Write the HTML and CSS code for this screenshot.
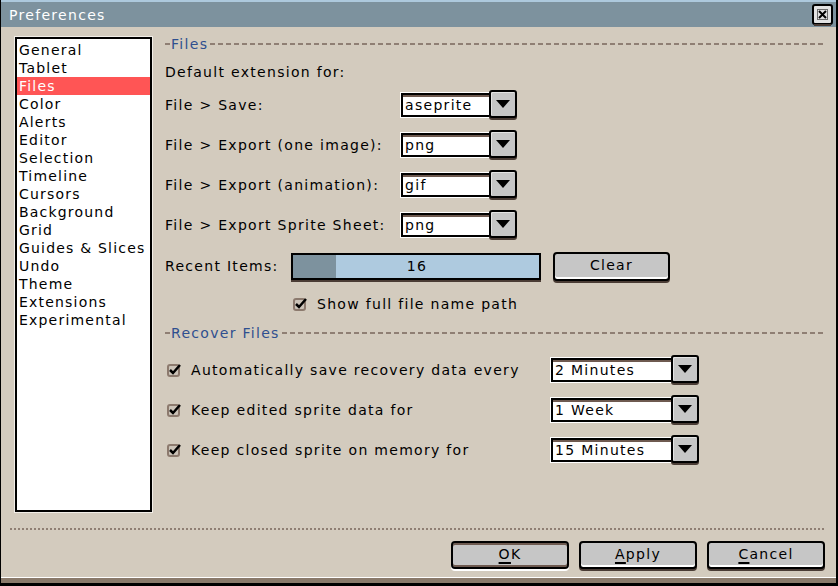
FILE: index.html
```html
<!DOCTYPE html>
<html lang="en">
<head>
    <meta charset="UTF-8">
    <title>Preferences</title>
    <link rel="stylesheet" href="styles.css">
</head>
<body>
<div class="window">
    <div class="titlebar">
        <span>Preferences</span>
        <span class="close">
            <svg width="21" height="23" viewBox="0 0 21 23"><rect x="1" y="1" width="19" height="19" rx="2" fill="#e2e2e2" stroke="#000" stroke-width="2"/><rect x="2" y="20" width="17" height="2" fill="#4a3c35"/><rect x="5.5" y="5.5" width="10" height="10" fill="none" stroke="#6c6c6c"/><path d="M7 7l7 7M14 7l-7 7" stroke="#000" stroke-width="2"/></svg>
        </span>
    </div>

    <div class="main">
        <ul class="sections">
            <li>General</li>
            <li>Tablet</li>
            <li class="active">Files</li>
            <li>Color</li>
            <li>Alerts</li>
            <li>Editor</li>
            <li>Selection</li>
            <li>Timeline</li>
            <li>Cursors</li>
            <li>Background</li>
            <li>Grid</li>
            <li>Guides &amp; Slices</li>
            <li>Undo</li>
            <li>Theme</li>
            <li>Extensions</li>
            <li>Experimental</li>
        </ul>

        <div class="panel">
            <div class="group">Files</div>
            <div class="note">Default extension for:</div>

            <div class="row first">
                <span class="label">File &gt; Save:</span>
                <div class="combo"><span class="entry">aseprite</span><span class="drop"></span></div>
            </div>
            <div class="row">
                <span class="label">File &gt; Export (one image):</span>
                <div class="combo"><span class="entry">png</span><span class="drop"></span></div>
            </div>
            <div class="row">
                <span class="label">File &gt; Export (animation):</span>
                <div class="combo"><span class="entry">gif</span><span class="drop"></span></div>
            </div>
            <div class="row">
                <span class="label">File &gt; Export Sprite Sheet:</span>
                <div class="combo"><span class="entry">png</span><span class="drop"></span></div>
            </div>

            <div class="recent">
                <span class="label">Recent Items:</span>
                <div class="slider"><span class="fill"></span><span class="value">16</span></div>
                <span class="btn clear">Clear</span>
            </div>

            <label class="check path">
                <svg width="16" height="16" viewBox="0 0 16 16"><rect x="1" y="3" width="11" height="11" rx="2" fill="#cbc3b8" stroke="#8c7a6e" stroke-width="2"/><path d="M3 8l3 3 7-8" fill="none" stroke="#000" stroke-width="2.5"/></svg>
                Show full file name path
            </label>

            <div class="group recover">Recover Files</div>

            <div class="row rfirst">
                <label class="check wide">
                    <svg width="16" height="16" viewBox="0 0 16 16"><rect x="1" y="3" width="11" height="11" rx="2" fill="#cbc3b8" stroke="#8c7a6e" stroke-width="2"/><path d="M3 8l3 3 7-8" fill="none" stroke="#000" stroke-width="2.5"/></svg>
                    Automatically save recovery data every
                </label>
                <div class="combo long"><span class="entry">2 Minutes</span><span class="drop"></span></div>
            </div>
            <div class="row">
                <label class="check wide">
                    <svg width="16" height="16" viewBox="0 0 16 16"><rect x="1" y="3" width="11" height="11" rx="2" fill="#cbc3b8" stroke="#8c7a6e" stroke-width="2"/><path d="M3 8l3 3 7-8" fill="none" stroke="#000" stroke-width="2.5"/></svg>
                    Keep edited sprite data for
                </label>
                <div class="combo long"><span class="entry">1 Week</span><span class="drop"></span></div>
            </div>
            <div class="row">
                <label class="check wide">
                    <svg width="16" height="16" viewBox="0 0 16 16"><rect x="1" y="3" width="11" height="11" rx="2" fill="#cbc3b8" stroke="#8c7a6e" stroke-width="2"/><path d="M3 8l3 3 7-8" fill="none" stroke="#000" stroke-width="2.5"/></svg>
                    Keep closed sprite on memory for
                </label>
                <div class="combo long"><span class="entry">15 Minutes</span><span class="drop"></span></div>
            </div>
        </div>
    </div>

    <div class="sep"></div>
    <div class="buttons">
        <span class="btn ok"><u>O</u>K</span>
        <span class="btn"><u>A</u>pply</span>
        <span class="btn"><u>C</u>ancel</span>
    </div>
</div>
</body>
</html>
```

FILE: styles.css
```css
body{
    margin: 0;
    font-family: "DejaVu Sans", sans-serif;
    font-size: 14px;
    letter-spacing: 1.3px;
    color: #000;
}
.window{
    width: 838px;
    height: 586px;
    box-sizing: border-box;
    background: #d3cbbe;
    border-left: 1px solid #000;
    border-right: 2px solid #000;
    border-bottom: 3px solid #000;
    box-shadow: inset 0 -5px 0 #8a7a6b, inset 0 -6px 0 #fff;
    display: flex;
    flex-direction: column;
}
.titlebar{
    height: 25px;
    border-top: 2px solid #adc9dd;
    background: #7d929e;
    color: #fff;
    display: flex;
    align-items: center;
    justify-content: space-between;
    padding: 0 3px 0 8px;
}
.close{
    display: flex;
    margin-top: 2px;
}
.main{
    display: flex;
    align-items: flex-start;
    padding: 10px 10px 0 14px;
}
.sections{
    list-style: none;
    margin: 0;
    padding: 2px 0;
    width: 137px;
    height: 475px;
    box-sizing: border-box;
    border: 2px solid #000;
    background: #fff;
    box-shadow: 0 0 0 1px #f2eee8;
    letter-spacing: 1.2px;
}
.sections li{
    height: 18px;
    line-height: 18px;
    padding-left: 2px;
}
.sections li.active{
    background: #ff5555;
    color: #fff;
}
.panel{
    flex: 1;
    margin-left: 13px;
    margin-top: -1px;
}
.group{
    display: flex;
    align-items: center;
    height: 16px;
    color: #2f4f8f;
}
.group::before{
    content: "";
    width: 5px;
    height: 2px;
    margin-right: 1px;
    background: #8f7f74;
}
.group::after{
    content: "";
    flex: 1;
    height: 2px;
    margin-left: 2px;
    background: repeating-linear-gradient(90deg, #8f7f74 0 5px, transparent 5px 8px);
}
.note{
    height: 18px;
    line-height: 18px;
    margin-top: 11px;
}
.row{
    display: flex;
    align-items: center;
    height: 30px;
    margin-top: 10px;
}
.row.first{
    margin-top: 9px;
}
.row .label{
    width: 236px;
}
.combo{
    display: flex;
    align-items: center;
}
.entry{
    width: 84px;
    height: 20px;
    line-height: 20px;
    padding-left: 2px;
    background: #fff;
    border: 2px solid #000;
    border-right: none;
    box-shadow: inset 0 2px 0 #6e5a50, 0 0 0 1px #fff;
}
.combo.long .entry{
    width: 116px;
}
.drop{
    width: 24px;
    height: 24px;
    background: #c6c6c6;
    border: 2px solid #000;
    border-radius: 3px;
    box-shadow: inset 1px 1px 0 #e4e4e4, 0 2px 0 #4a3c35;
    display: flex;
    align-items: center;
    justify-content: center;
    margin-top: -2px;
}
.drop::after{
    content: "";
    border-left: 7px solid transparent;
    border-right: 7px solid transparent;
    border-top: 8px solid #000;
}
.recent{
    display: flex;
    align-items: center;
    height: 32px;
    margin-top: 10px;
}
.recent .label{
    width: 126px;
}
.slider{
    position: relative;
    width: 246px;
    height: 23px;
    border: 2px solid #000;
    background: #aecadf;
    box-shadow: 0 2px 0 #4a3c35;
    display: flex;
    align-items: center;
    justify-content: center;
}
.slider .fill{
    position: absolute;
    left: 0;
    top: 0;
    bottom: 0;
    width: 43px;
    background: #7d929e;
}
.slider .value{
    position: relative;
    margin-left: 2px;
}
.btn{
    box-sizing: border-box;
    width: 118px;
    height: 28px;
    background: #c6c6c6;
    border: 2px solid #000;
    border-radius: 4px;
    box-shadow: inset 0 -2px 0 #fff, 0 2px 0 #4a3c35;
    display: flex;
    align-items: center;
    justify-content: center;
    padding-bottom: 2px;
}
.btn.clear{
    width: 117px;
    height: 29px;
    margin-left: 12px;
}
.btn u{
    text-decoration-thickness: 2px;
    text-underline-offset: 3px;
}
.check{
    display: flex;
    align-items: center;
    gap: 8px;
}
.check.path{
    height: 16px;
    margin: 14px 0 0 128px;
}
.check.wide{
    width: 384px;
    padding-left: 2px;
}
.group.recover{
    margin-top: 13px;
}
.row.rfirst{
    margin-top: 14px;
}
.sep{
    height: 2px;
    margin: 16px 10px 0 9px;
    background: repeating-linear-gradient(90deg, #8f7f74 0 2px, transparent 2px 4px);
}
.buttons{
    display: flex;
    justify-content: flex-end;
    gap: 10px;
    margin-top: 11px;
    padding-right: 11px;
}
.btn.ok{
    box-shadow: inset 0 2px 0 #6e5a50, inset 0 -2px 0 #6e5a50, 0 2px 0 #fff;
}
```
